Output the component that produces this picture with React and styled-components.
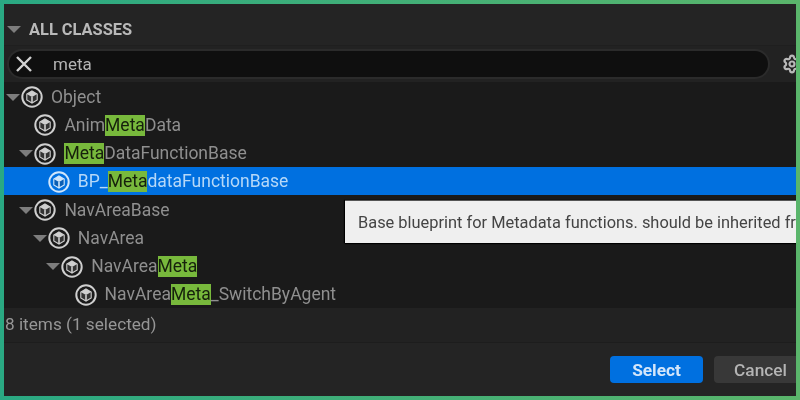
import styled, { createGlobalStyle } from 'styled-components'
import { Settings } from 'lucide-react'

const GlobalStyle = createGlobalStyle`
	html, body {
		margin: 0;
		padding: 0;
		background: #2fab80;
	}
`

const Frame = styled.div`
	width: 800px;
	height: 400px;
	box-sizing: border-box;
	padding: 4px;
	background: linear-gradient(90deg, #2aa983, #5ab56b);
	overflow: hidden;
	font-family: Roboto, 'Liberation Sans', sans-serif;
`

const Panel = styled.div`
	position: relative;
	height: 100%;
	display: flex;
	flex-direction: column;
	background: #242424;
	overflow: hidden;
	filter: blur(0.5px);
`

const Header = styled.div`
	height: 41px;
	flex: none;
	display: flex;
	align-items: center;
	gap: 8px;
	padding: 10px 0 0 3px;
	box-sizing: border-box;
	color: #b9b9b9;
	font-size: 16.4px;
	font-weight: 700;
`

const Triangle = styled.span`
	flex: none;
	width: 0;
	height: 0;
	border-left: ${(p) => p.$size}px solid transparent;
	border-right: ${(p) => p.$size}px solid transparent;
	border-top: ${(p) => p.$size}px solid #7d7d7d;
`

const SearchRow = styled.div`
	height: 37px;
	flex: none;
	display: flex;
	align-items: center;
	gap: 12px;
	box-sizing: border-box;
	padding: 0 0 0 3px;
	background: #222;
	border-top: 1px solid #1f1f1f;
`

const SearchBox = styled.div`
	width: 763px;
	height: 30px;
	flex: none;
	display: flex;
	align-items: center;
	gap: 20px;
	box-sizing: border-box;
	padding-left: 6px;
	background: #0f0f0f;
	border: 2px solid #2b2b2b;
	border-radius: 15px;
	color: #b4b4b4;
	font-size: 17px;
`

const GearIcon = styled(Settings)`
	flex: none;
	color: #b8b8b8;
`

const Tree = styled.div`
	height: 226px;
	flex: none;
	display: grid;
	grid-template-rows: repeat(8, 1fr);
	background: #1a1a1a;
`

const Row = styled.div`
	display: flex;
	align-items: center;
	box-sizing: border-box;
	padding: 2px 0 0 ${(p) => 1 + p.$depth * 13.4}px;
	background: ${(p) => (p.$selected ? '#0070e0' : 'transparent')};
	color: ${(p) => (p.$selected ? '#b5d8f8' : '#8f8f8f')};
	font-size: 17.5px;
`

const Arrow = styled.span`
	flex: none;
	width: 16px;
	display: flex;
	justify-content: center;
`

const Label = styled.span`
	margin-left: 8px;
	white-space: nowrap;
	line-height: 21px;
`

const Match = styled.span`
	display: inline-block;
	height: 21px;
	background: #78b93c;
	color: #16200c;
`

const Status = styled.div`
	height: 35px;
	flex: none;
	display: flex;
	align-items: center;
	padding: 0 0 2px 1px;
	box-sizing: border-box;
	background: #222;
	border-bottom: 1px solid #1d1d1d;
	color: #969696;
	font-size: 17.2px;
`

const Footer = styled.div`
	flex: 1;
	display: flex;
	justify-content: flex-end;
	align-items: center;
	gap: 11px;
	margin-right: -11px;
`

const Button = styled.div`
	width: 93px;
	height: 27px;
	flex: none;
	display: flex;
	align-items: center;
	justify-content: center;
	border-radius: 4px;
	font-size: 17.3px;
	background: ${(p) => (p.$primary ? '#0070e0' : '#383838')};
	color: ${(p) => (p.$primary ? '#d4e6fa' : '#b4b4b4')};
	font-weight: ${(p) => (p.$primary ? 700 : 500)};
`

const Tooltip = styled.div`
	position: absolute;
	left: 341px;
	top: 196px;
	width: 480px;
	height: 43px;
	display: flex;
	align-items: center;
	box-sizing: border-box;
	padding-left: 13px;
	background: #efefef;
	border-top: 1px solid #555;
	box-shadow: 0 1px 1px #000, -1px 0 1px #000;
	color: #444;
	font-size: 16.4px;
	white-space: nowrap;
`

function ClassIcon({ selected }) {
	const c = selected ? '#d0e6fb' : '#cfcfcf'
	const dim = selected ? '#0a5eb4' : '#333'
	return (
		<svg width="22" height="22" viewBox="0 0 22 22" style={{ flex: 'none' }}>
			<circle cx="11" cy="11" r="9.7" fill="none" stroke={c} strokeWidth="2" />
			<polygon points="11,5 16.2,8 16.2,14 11,17 5.8,14 5.8,8" fill={dim} stroke={c} strokeWidth="1.1" />
			<polygon points="11,5 16.2,8 11,11 5.8,8" fill={c} />
			<path d="M11 11 V17" fill="none" stroke={c} strokeWidth="1.6" />
		</svg>
	)
}

function CloseIcon() {
	return (
		<svg width="18" height="18" viewBox="0 0 18 18" style={{ flex: 'none' }}>
			<path d="M2 2 L16 16 M16 2 L2 16" stroke="#d2d2d2" strokeWidth="2.4" fill="none" />
		</svg>
	)
}

const items = [
	{ depth: 0, open: true, parts: ['Object'] },
	{ depth: 1, parts: ['Anim', '*Meta', 'Data'] },
	{ depth: 1, open: true, parts: ['*Meta', 'DataFunctionBase'] },
	{ depth: 2, selected: true, parts: ['BP_', '*Meta', 'dataFunctionBase'] },
	{ depth: 1, open: true, parts: ['NavAreaBase'] },
	{ depth: 2, open: true, parts: ['NavArea'] },
	{ depth: 3, open: true, parts: ['NavArea', '*Meta'] },
	{ depth: 4, parts: ['NavArea', '*Meta', '_SwitchByAgent'] },
]

export default function App() {
	return (
		<Frame>
			<GlobalStyle />
			<Panel>
				<Header>
					<Triangle $size={7} />
					ALL CLASSES
				</Header>
				<SearchRow>
					<SearchBox>
						<CloseIcon />
						meta
					</SearchBox>
					<GearIcon size={20} strokeWidth={2.6} />
				</SearchRow>
				<Tree>
					{items.map((item, i) => (
						<Row key={i} $depth={item.depth} $selected={item.selected}>
							<Arrow>{item.open && <Triangle $size={7} />}</Arrow>
							<ClassIcon selected={item.selected} />
							<Label>
								{item.parts.map((part, j) =>
									part[0] === '*' ? <Match key={j}>{part.slice(1)}</Match> : <span key={j}>{part}</span>
								)}
							</Label>
						</Row>
					))}
				</Tree>
				<Status>8 items (1 selected)</Status>
				<Footer>
					<Button $primary>Select</Button>
					<Button>Cancel</Button>
				</Footer>
				<Tooltip>Base blueprint for Metadata functions. should be inherited from</Tooltip>
			</Panel>
		</Frame>
	)
}
